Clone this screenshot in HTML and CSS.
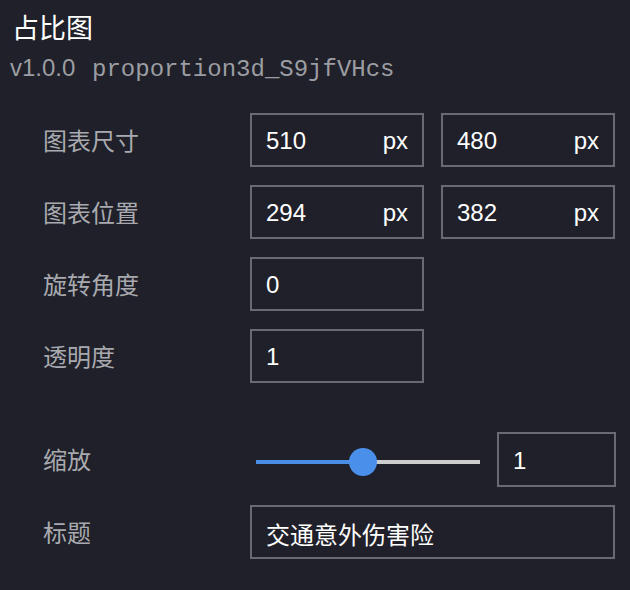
FILE: index.html
```html
<!DOCTYPE html>
<html lang="zh-CN">
<head>
    <meta charset="UTF-8">
    <meta name="viewport" content="width=device-width, initial-scale=1.0">
    <title>占比图</title>
    <link rel="stylesheet" href="styles.css">
</head>
<body>

<div class="panel">
    <div class="panel-head">
        <h1 class="title">占比图</h1>
        <div class="meta">v1.0.0 <code class="id">proportion3d_S9jfVHcs</code></div>
    </div>

    <form class="props">
        <div class="row">
            <label class="label">图表尺寸</label>
            <div class="fields">
                <div class="field">
                    <input class="input" type="text" value="510">
                    <span class="unit">px</span>
                </div>
                <div class="field">
                    <input class="input" type="text" value="480">
                    <span class="unit">px</span>
                </div>
            </div>
        </div>

        <div class="row">
            <label class="label">图表位置</label>
            <div class="fields">
                <div class="field">
                    <input class="input" type="text" value="294">
                    <span class="unit">px</span>
                </div>
                <div class="field">
                    <input class="input" type="text" value="382">
                    <span class="unit">px</span>
                </div>
            </div>
        </div>

        <div class="row">
            <label class="label">旋转角度</label>
            <div class="fields">
                <div class="field">
                    <input class="input" type="text" value="0">
                </div>
            </div>
        </div>

        <div class="row">
            <label class="label">透明度</label>
            <div class="fields">
                <div class="field">
                    <input class="input" type="text" value="1">
                </div>
            </div>
        </div>

        <div class="row row-spaced">
            <label class="label">缩放</label>
            <div class="fields">
                <input class="slider" type="range" min="0.1" max="2" step="0.1" value="1" style="--fill: 47.4%;">
                <div class="field field-small">
                    <input class="input" type="text" value="1">
                </div>
            </div>
        </div>

        <div class="row">
            <label class="label">标题</label>
            <div class="fields">
                <div class="field field-wide">
                    <input class="input" type="text" value="交通意外伤害险">
                </div>
            </div>
        </div>
    </form>
</div>

</body>
</html>
```

FILE: styles.css
```css
body {
    margin: 0;
    padding: 0;
    background: #1f2029;
    color: #fff;
    font-family: 'Liberation Sans', Arial, 'Noto Sans CJK SC', sans-serif;
    width: 630px;
    height: 590px;
    overflow: hidden;
}

.panel {
    padding: 11px 15px 0 0;
}

.panel-head {
    padding-left: 12px;
}

.title {
    margin: 0;
    font-size: 27px;
    line-height: 36px;
    font-weight: normal;
    color: #fff;
}

.meta {
    margin-top: 6px;
    margin-left: -2px;
    font-size: 24px;
    line-height: 30px;
    color: #9c9da2;
}

.id {
    font-family: 'Liberation Mono', 'Courier New', monospace;
    font-size: 24px;
    margin-left: 10px;
}

.props {
    margin-top: 28px;
    padding-left: 43px;
    display: flex;
    flex-direction: column;
    gap: 18px;
}

.row {
    display: flex;
    align-items: center;
    height: 54px;
}

.row-spaced {
    margin-top: 31px;
    height: 55px;
}

.label {
    width: 207px;
    flex: none;
    padding-top: 3px;
    font-size: 24px;
    line-height: 28px;
    color: #a9aaaf;
}

.fields {
    display: flex;
    align-items: center;
    gap: 17px;
}

.field {
    position: relative;
    width: 174px;
    height: 54px;
    box-sizing: border-box;
    border: 2px solid #686b72;
    display: flex;
    align-items: center;
}

.field-small {
    width: 119px;
    height: 55px;
}

.field-wide {
    width: 365px;
}

.input {
    flex: 1;
    min-width: 0;
    height: 100%;
    box-sizing: border-box;
    border: none;
    outline: none;
    background: transparent;
    color: #fff;
    padding: 2px 0 0 14px;
    font-family: 'Liberation Sans', Arial, 'Noto Sans CJK SC', sans-serif;
    font-size: 24px;
}

.unit {
    padding: 2px 14px 0 0;
    font-size: 24px;
    color: #fff;
}

.slider {
    -webkit-appearance: none;
    appearance: none;
    width: 224px;
    height: 28px;
    margin: 4px 0 0 6px;
    background: transparent;
}

.slider::-webkit-slider-runnable-track {
    height: 4px;
    background: linear-gradient(to right, #4a8de4 0, #4a8de4 var(--fill), #cdcdcd var(--fill), #cdcdcd 100%);
}

.slider::-webkit-slider-thumb {
    -webkit-appearance: none;
    appearance: none;
    width: 28px;
    height: 28px;
    margin-top: -12px;
    border-radius: 50%;
    background: #4a90ea;
    border: none;
}
```
